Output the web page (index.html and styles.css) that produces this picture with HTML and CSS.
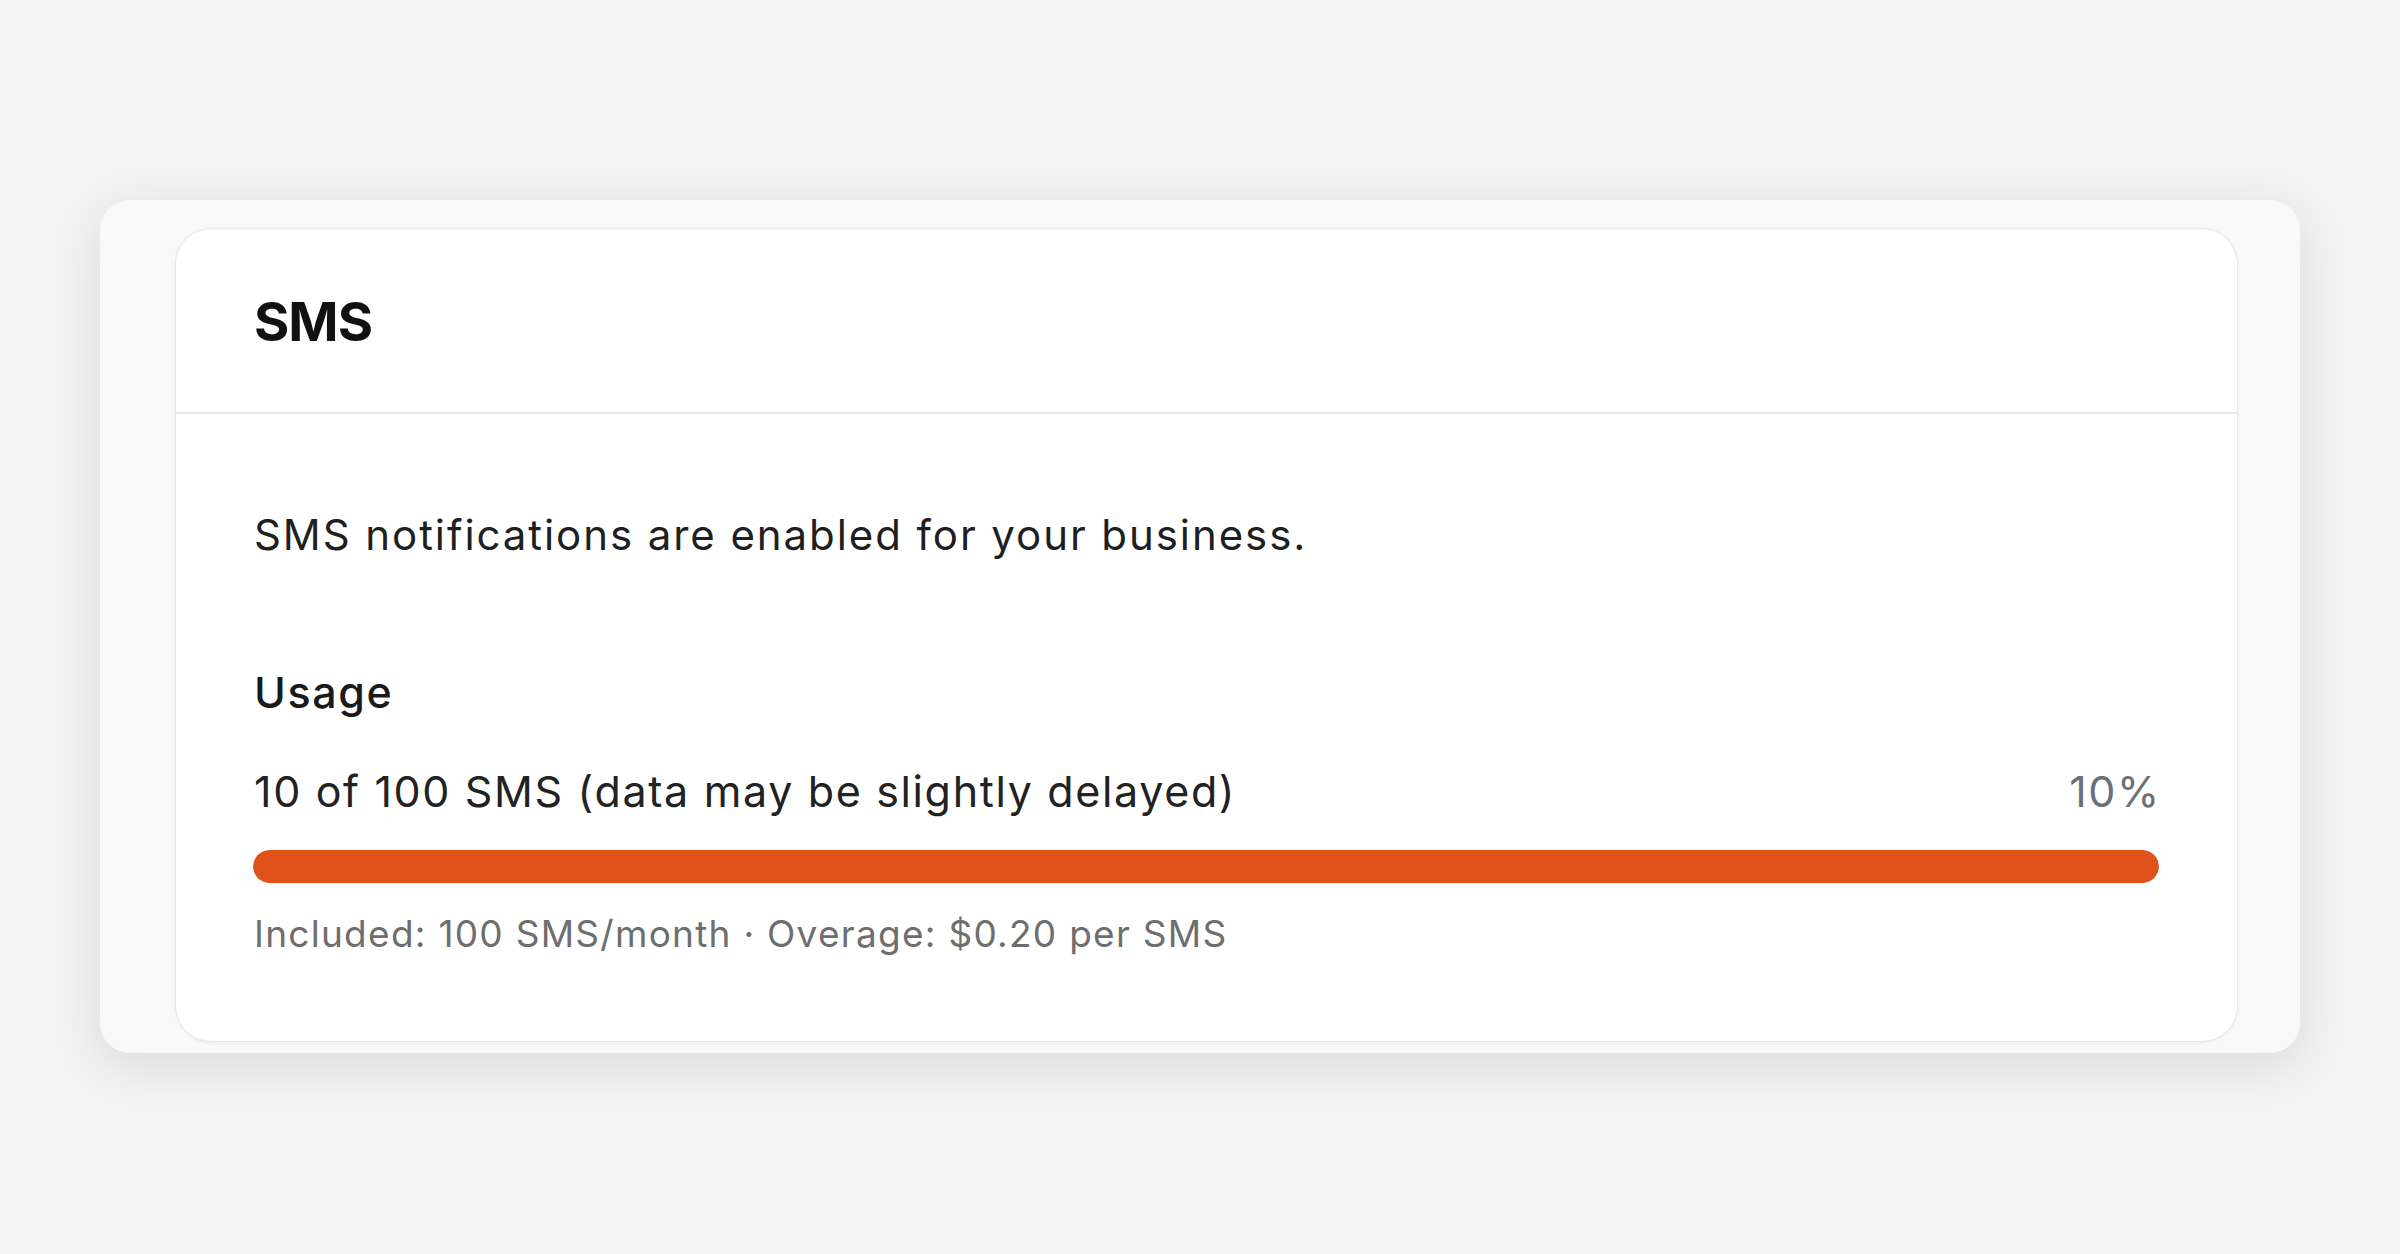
FILE: index.html
```html
<!DOCTYPE html>
<html lang="en">
<head>
  <meta charset="UTF-8">
  <meta name="viewport" content="width=device-width, initial-scale=1.0">
  <title>SMS Settings</title>
  <link rel="stylesheet" href="styles.css">
</head>
<body>

  <!-- Settings panel holding the SMS card -->
  <div class="panel">
    <section class="card">
      <header class="card-header">
        <h2 class="card-title">SMS</h2>
      </header>

      <div class="card-body">
        <p class="status">SMS notifications are enabled for your business.</p>

        <!-- Usage meter -->
        <h3 class="usage-title">Usage</h3>
        <div class="usage-row">
          <span class="usage-count">10 of 100 SMS (data may be slightly delayed)</span>
          <span class="usage-percent">10%</span>
        </div>
        <div class="meter">
          <div class="meter-fill" style="width: 100%"></div>
        </div>
        <p class="usage-note">Included: 100 SMS/month &middot; Overage: $0.20 per SMS</p>
      </div>
    </section>
  </div>

</body>
</html>
```

FILE: styles.css
```css
/* Page background */
body {
  margin: 0;
  min-height: 100vh;
  font-family: 'Inter', 'Noto Sans', sans-serif;
  background-color: #f3f3f3;
  color: #1d1d1f;
}

/* Light framed panel around the card */
.panel {
  width: 2200px;
  height: 853px;
  box-sizing: border-box;
  margin: 200px 0 0 100px;
  padding: 28px 62px 11px 75px;
  border-radius: 30px;
  background-color: #f9f9f9;
  box-shadow: 0 12px 50px rgba(0, 0, 0, 0.1);
}

/* The card itself */
.card {
  height: 100%;
  box-sizing: border-box;
  border: 1px solid #e6e6e6;
  border-radius: 36px;
  background-color: #fff;
  box-shadow: 0 1px 3px rgba(0, 0, 0, 0.06);
  overflow: hidden;
}

.card-header {
  padding: 60px 78px 57px;
  border-bottom: 2px solid #e8e8e8;
}

.card-title {
  margin: 0;
  font-size: 54px;
  line-height: 66px;
  font-weight: 700;
  letter-spacing: -1px;
  color: #111;
}

.card-body {
  padding: 91px 78px 0 78px;
}

.status {
  margin: 0;
  font-size: 42px;
  line-height: 60px;
  letter-spacing: 1.92px;
  color: #1f1f1f;
}

.usage-title {
  margin: 97px 0 0;
  font-size: 43px;
  line-height: 60px;
  font-weight: 500;
  letter-spacing: 1.6px;
  color: #1a1a1a;
}

.usage-row {
  display: flex;
  justify-content: space-between;
  align-items: baseline;
  margin-top: 39px;
  margin-right: -2px;
  font-size: 43px;
  line-height: 60px;
  letter-spacing: 1.65px;
}

.usage-count {
  color: #222;
}

.usage-percent {
  color: #6b6f78;
}

/* Progress bar */
.meter {
  height: 33px;
  margin: 29px 0 0 -1px;
  border-radius: 17px;
  background-color: #eee;
  overflow: hidden;
}

.meter-fill {
  height: 100%;
  border-radius: 17px;
  background-color: #e1521b;
}

.usage-note {
  margin: 26px 0 0;
  font-size: 37px;
  line-height: 50px;
  letter-spacing: 1.27px;
  color: #6e6e6e;
}
```
